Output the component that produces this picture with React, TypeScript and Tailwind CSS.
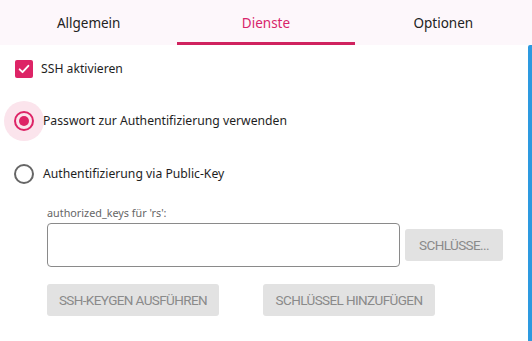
import React from 'react';

const Tab: React.FC<{ label: string; active?: boolean }> = ({ label, active }) => (
  <div className="flex-1 flex flex-col items-center">
    <div className={`h-[42px] pt-[4px] flex items-center text-[13.5px] ${active ? 'text-[#d8246a]' : 'text-[#222]'}`}>{label}</div>
    <div className={`h-[3px] w-full ${active ? 'bg-[#d0225f]' : ''}`} />
  </div>
);

const GreyButton: React.FC<{ label: string; className?: string }> = ({ label, className }) => (
  <button
    className={`h-[32px] bg-[#e2e2e2] rounded-[3px] text-[13.5px] text-[#8a8a8a] tracking-[-0.6px] font-['Roboto',sans-serif] ${className ?? ''}`}
  >
    {label}
  </button>
);

export default function App() {
  return (
    <div className="w-[532px] h-[341px] bg-white flex flex-col font-['Noto_Sans','Open_Sans',sans-serif] overflow-hidden">
      <div className="flex bg-[#fdf7fb] h-[45px]">
        <Tab label="Allgemein" />
        <Tab label="Dienste" active />
        <Tab label="Optionen" />
      </div>
      <div className="flex flex-1">
        <div className="flex-1 flex flex-col pt-[12px]">
          <label className="flex items-center h-[24px] pl-[15px]">
            <span className="w-[18px] h-[18px] rounded-[2px] bg-[#dd2466] flex items-center justify-center">
              <svg width="14" height="14" viewBox="0 0 24 24" fill="none" stroke="white" strokeWidth="3.2" strokeLinecap="round" strokeLinejoin="round">
                <path d="M4.5 12.5l5 5 10-11" />
              </svg>
            </span>
            <span className="ml-[8px] text-[12.2px] text-[#1e1e1e]">SSH aktivieren</span>
          </label>

          <div className="flex items-center mt-[20px] h-[40px] pl-[4px]">
            <span className="w-[40px] h-[40px] rounded-full bg-[#fbe4ec] flex items-center justify-center">
              <span className="w-[20px] h-[20px] rounded-full border-[2px] border-[#dd2466] flex items-center justify-center">
                <span className="w-[10px] h-[10px] rounded-full bg-[#dd2466]" />
              </span>
            </span>
            <span className="ml-[-1px] text-[12.2px] text-[#1e1e1e]">Passwort zur Authentifizierung verwenden</span>
          </div>

          <div className="flex items-center mt-[13px] h-[40px] pl-[4px]">
            <span className="w-[40px] h-[40px] flex items-center justify-center">
              <span className="w-[20px] h-[20px] rounded-full border-[2px] border-[#666]" />
            </span>
            <span className="ml-[-1px] text-[12.2px] text-[#1e1e1e]">Authentifizierung via Public-Key</span>
          </div>

          <div className="pl-[47px] mt-[11px] flex flex-col">
            <div className="text-[10.8px] text-[#666] h-[16px] leading-[16px]">authorized_keys für 'rs':</div>
            <div className="flex items-center mt-[2px]">
              <div className="w-[353px] h-[44px] border border-[#8a8a8a] rounded-[4px]" />
              <GreyButton label="SCHLÜSSE..." className="ml-[5px] w-[98px]" />
            </div>
            <div className="flex mt-[17px]">
              <GreyButton label="SSH-KEYGEN AUSFÜHREN" className="w-[172px]" />
              <GreyButton label="SCHLÜSSEL HINZUFÜGEN" className="ml-[44px] w-[172px]" />
            </div>
          </div>
        </div>
        <div className="w-[4px] bg-[#2d9ae0] rounded-tl-[2px]" />
      </div>
    </div>
  );
}
